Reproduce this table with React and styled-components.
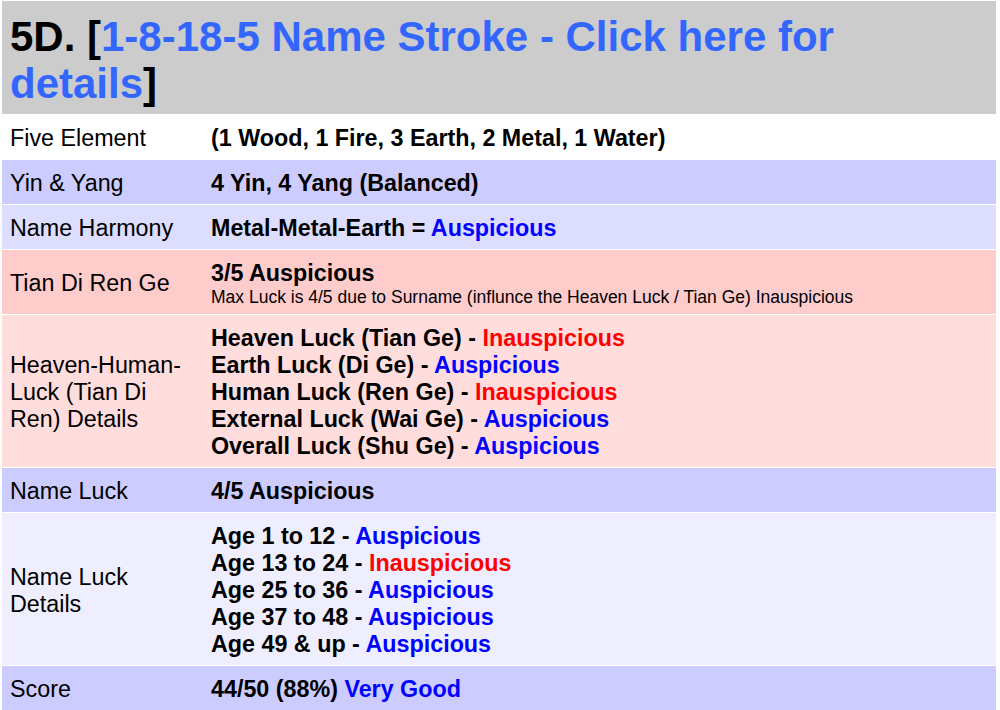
import React from "react";
import styled, { createGlobalStyle } from "styled-components";

const Global = createGlobalStyle`
  html, body { margin: 0; padding: 0; background: #fff; }
  body { font-family: "Liberation Sans", Arial, sans-serif; color: #000; }
`;

const Table = styled.table`
  border-collapse: separate;
  border-spacing: 0 1px;
  width: 994px;
  margin: 0 0 0 2px;
  font-family: "Liberation Sans", Arial, sans-serif;
`;

const HeaderCell = styled.th`
  background: #cccccc;
  text-align: left;
  font-size: 42px;
  line-height: 47px;
  font-weight: bold;
  padding: 12px 8px 7px;
  color: #000;
`;

const HeaderLink = styled.a`
  color: #3366ff;
  text-decoration: none;
`;

const Row = styled.tr`
  background: ${(p) => p.$bg};
`;

const Label = styled.td`
  width: 185px;
  padding: 10px 8px 7px;
  font-size: 23.3px;
  line-height: 27px;
  font-weight: normal;
  vertical-align: middle;
`;

const Value = styled.td`
  padding: 10px 8px 7px;
  font-size: 23.3px;
  line-height: 27px;
  font-weight: bold;
  vertical-align: middle;
`;

const Line = styled.div``;

const Note = styled.div`
  font-size: 17.5px;
  line-height: 20px;
  font-weight: normal;
`;

const Good = styled.span`
  color: #0000ff;
`;

const Bad = styled.span`
  color: #ff0000;
`;

const Verdict = ({ ok }) => (ok ? <Good>Auspicious</Good> : <Bad>Inauspicious</Bad>);

const heaven = [
  ["Heaven Luck (Tian Ge)", false],
  ["Earth Luck (Di Ge)", true],
  ["Human Luck (Ren Ge)", false],
  ["External Luck (Wai Ge)", true],
  ["Overall Luck (Shu Ge)", true],
];

const ages = [
  ["Age 1 to 12", true],
  ["Age 13 to 24", false],
  ["Age 25 to 36", true],
  ["Age 37 to 48", true],
  ["Age 49 & up", true],
];

export default function App() {
  return (
    <>
      <Global />
      <Table>
        <tbody>
          <tr>
            <HeaderCell colSpan={2}>
              5D. [<HeaderLink href="#">1-8-18-5 Name Stroke - Click here for details</HeaderLink>]
            </HeaderCell>
          </tr>
          <Row $bg="#ffffff">
            <Label>Five Element</Label>
            <Value>(1 Wood, 1 Fire, 3 Earth, 2 Metal, 1 Water)</Value>
          </Row>
          <Row $bg="#ccccff">
            <Label>Yin &amp; Yang</Label>
            <Value>4 Yin, 4 Yang (Balanced)</Value>
          </Row>
          <Row $bg="#ddddff">
            <Label>Name Harmony</Label>
            <Value>
              Metal-Metal-Earth = <Good>Auspicious</Good>
            </Value>
          </Row>
          <Row $bg="#ffcccc">
            <Label>Tian Di Ren Ge</Label>
            <Value>
              <Line>3/5 Auspicious</Line>
              <Note>Max Luck is 4/5 due to Surname (influnce the Heaven Luck / Tian Ge) Inauspicious</Note>
            </Value>
          </Row>
          <Row $bg="#ffdddd">
            <Label>Heaven-Human-Luck (Tian Di Ren) Details</Label>
            <Value>
              {heaven.map(([t, ok]) => (
                <Line key={t}>
                  {t} - <Verdict ok={ok} />
                </Line>
              ))}
            </Value>
          </Row>
          <Row $bg="#ccccff">
            <Label>Name Luck</Label>
            <Value>4/5 Auspicious</Value>
          </Row>
          <Row $bg="#eeeeff">
            <Label>Name Luck Details</Label>
            <Value>
              {ages.map(([t, ok]) => (
                <Line key={t}>
                  {t} - <Verdict ok={ok} />
                </Line>
              ))}
            </Value>
          </Row>
          <Row $bg="#ccccff">
            <Label>Score</Label>
            <Value>
              44/50 (88%) <Good>Very Good</Good>
            </Value>
          </Row>
        </tbody>
      </Table>
    </>
  );
}
